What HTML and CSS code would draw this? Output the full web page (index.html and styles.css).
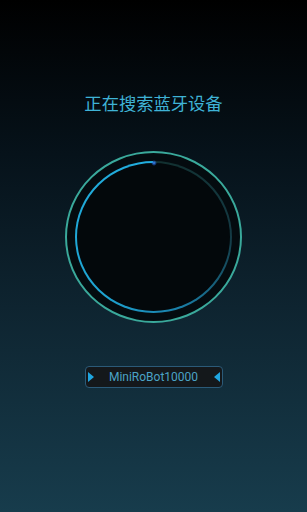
FILE: index.html
```html
<!DOCTYPE html>
<html lang="zh">
<head>
    <meta charset="UTF-8">
    <meta name="viewport" content="width=device-width, initial-scale=1.0">
    <title>搜索蓝牙设备</title>
    <link rel="stylesheet" href="styles.css">
</head>
<body>
    <h1 class="title">正在搜索蓝牙设备</h1>
    <div class="radar">
        <div class="sweep">
            <div class="core"></div>
        </div>
        <span class="spark"></span>
    </div>
    <div class="device">
        <i class="arrow right"></i>
        <span class="name">MiniRoBot10000</span>
        <i class="arrow left"></i>
    </div>
</body>
</html>
```

FILE: styles.css
```css
/* Search screen */
body {
    margin: 0;
    height: 100vh;
    background: linear-gradient(to bottom, #000000 0%, #06121a 30%, #0e2430 60%, #173c4c 100%);
    font-family: "Noto Sans CJK SC", "Noto Sans", sans-serif;
    display: flex;
    flex-direction: column;
    align-items: center;
}

.title {
    margin: 93px 0 0;
    font-size: 17.3px;
    line-height: 20px;
    font-weight: 400;
    color: #3fb3d6;
}

.radar {
    position: relative;
    margin-top: 38px;
    width: 173px;
    height: 168px;
    border: 2px solid #3aa99b;
    border-radius: 50%;
    background: #040b0f;
    display: flex;
    align-items: center;
    justify-content: center;
}

.sweep {
    width: 157px;
    height: 152px;
    padding: 2px;
    box-sizing: border-box;
    border-radius: 50%;
    background: conic-gradient(from 0deg, #12302f 0deg, #143a44 90deg, #1a7fa8 160deg, #1ea4d2 220deg, #22aedf 360deg);
    display: flex;
}

.core {
    flex: 1;
    border-radius: 50%;
    background: #03080b;
}

.spark {
    position: absolute;
    top: 7px;
    left: 50%;
    width: 6px;
    height: 6px;
    margin-left: -3px;
    border-radius: 50%;
    background: radial-gradient(circle, #3a8cff 0%, rgba(40, 110, 230, 0.5) 40%, rgba(30, 90, 200, 0) 70%);
}

.device {
    margin-top: 43px;
    width: 138px;
    height: 22px;
    box-sizing: border-box;
    border: 1px solid #2b5a78;
    border-radius: 4px;
    background: #14181b;
    display: flex;
    align-items: center;
    justify-content: space-between;
    padding: 0 2px;
}

.name {
    font-family: Roboto, "Noto Sans", sans-serif;
    font-size: 12px;
    color: #4aa3c6;
}

.arrow {
    width: 0;
    height: 0;
    border-top: 5px solid transparent;
    border-bottom: 5px solid transparent;
}

.arrow.right {
    border-left: 6px solid #1fa6e0;
}

.arrow.left {
    border-right: 6px solid #1fa6e0;
}
```
